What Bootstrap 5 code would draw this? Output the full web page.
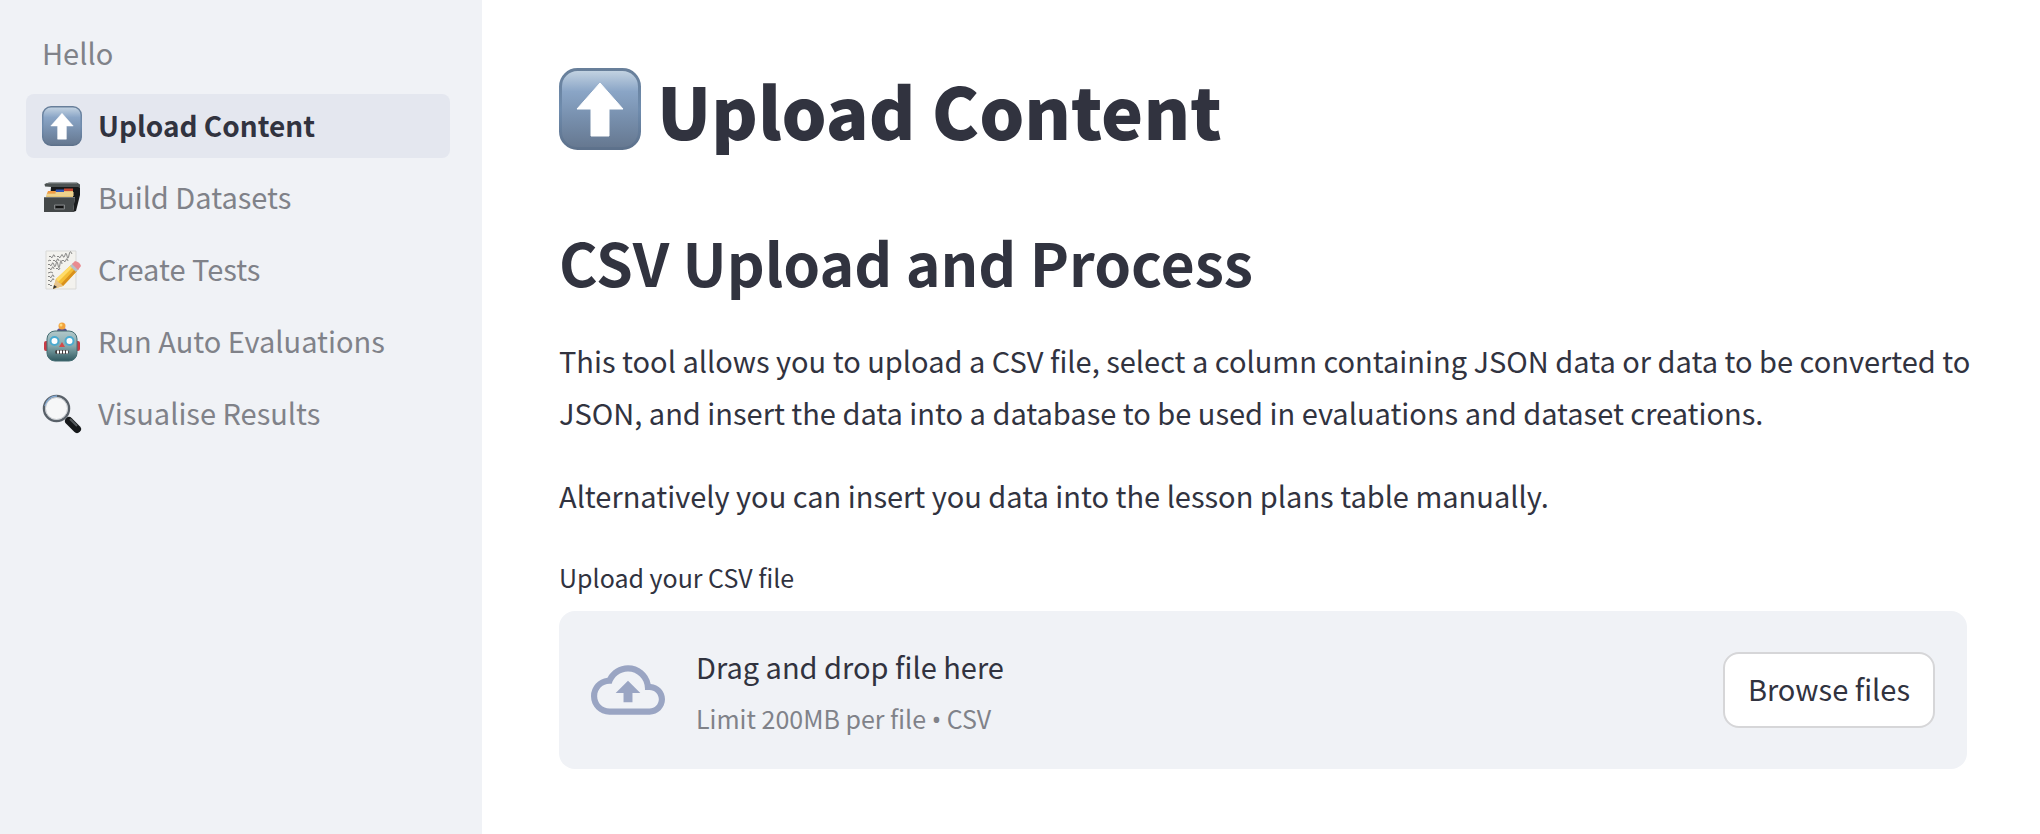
<!DOCTYPE html>
<html lang="en">
<head>
<meta charset="utf-8">
<meta name="viewport" content="width=device-width, initial-scale=1">
<title>Upload Content</title>
<link href="https://cdn.jsdelivr.net/npm/bootstrap@5.3.0/dist/css/bootstrap.min.css" rel="stylesheet">
<style>
:root{--ink:#31333f;--muted:#808289;--panel:#f0f2f6;--active:#e4e7ef}
body{font-family:"Noto Sans CJK SC","Source Sans Pro",sans-serif;font-size:29px;line-height:52px;color:var(--ink);background:#fff}
.side-panel{flex:0 0 482px;background:var(--panel);padding:22px 32px 22px 26px}
.side-panel .nav{gap:8px}
.side-panel .nav-link{height:64px;padding:0 16px;gap:16px;border-radius:8px;color:var(--muted)}
.side-panel .nav-link span{padding-bottom:4px}
.side-panel .nav-link.active{background:var(--active);color:var(--ink);font-size:28px;font-weight:700}
.side-panel .nav-link.active span{padding-bottom:2px}
.side-panel svg{width:40px;height:40px;flex:none}
.content-area{min-width:0;padding:57px 73px 65px 77px}
h1{font-size:71px;line-height:104px;font-weight:900;gap:16px;margin:0 0 57px}
h1 svg{width:82px;height:82px;flex:none}
h2{font-size:59px;line-height:88px;font-weight:600;margin:0 0 28px}
.intro p{margin:0 -16px 31px 0}
.file-label{font-size:25px;line-height:50px;margin:0 0 9px}
.drop-zone{background:var(--panel);border-radius:16px;padding:16px 32px;min-height:158px}
.drop-zone .cloud{width:74px;height:74px;margin-right:31px;fill:#9aa5c3}
.drop-text{padding-top:5px}
.hint{font-size:25px;color:var(--muted)}
.dot{font-family:"Noto Sans",sans-serif}
.btn-browse{font-size:29px;line-height:48px;padding:10px 23px 14px;border:2px solid #d6d6d8;border-radius:16px;background:#fff;color:var(--ink)}
</style>
</head>
<body>
<svg class="position-absolute" width="0" height="0" aria-hidden="true">
<defs>
<linearGradient id="key" x1="0" y1="0" x2="0" y2="1"><stop offset="0" stop-color="#c6d5e3"/><stop offset=".28" stop-color="#8aa5c6"/><stop offset=".6" stop-color="#7890ae"/><stop offset="1" stop-color="#65778f"/></linearGradient>
<linearGradient id="rim" x1="0" y1="0" x2="0" y2="1"><stop offset="0" stop-color="#687f9a"/><stop offset=".5" stop-color="#6f8cae"/><stop offset="1" stop-color="#5d718b"/></linearGradient>
</defs>
</svg>
<div class="d-flex min-vh-100">
<aside class="side-panel">
<nav class="nav flex-column flex-nowrap" aria-label="Pages">
<a class="nav-link d-flex align-items-center" href="#"><span>Hello</span></a>
<a class="nav-link active d-flex align-items-center" href="#" aria-current="page">
<svg viewBox="0 0 82 82" aria-hidden="true"><rect x="1.5" y="1.5" width="79" height="79" rx="17" fill="url(#key)" stroke="url(#rim)" stroke-width="3"/><path d="M41 15 64 41H50V68H32V41H18Z" fill="#fff" stroke="#fff" stroke-linejoin="round"/></svg>
<span>Upload Content</span></a>
<a class="nav-link d-flex align-items-center" href="#">
<svg viewBox="0 0 40 40" aria-hidden="true"><g transform="translate(0 3)"><path d="M33 14 38 5V14L34 30 31 31Z" fill="#191b1c"/><path d="M9 6H37V15L33 17H8Z" fill="#17191a"/><path d="M2.500 3 7 1.500H35L38 3.500V7L36 6H10L3 5.500Z" fill="#4b5151"/><path d="M4 2.500H35" stroke="#697070"/><path d="M4 16 5 12 13 10H31V17H4Z" fill="#e4c477"/><path d="M14 8.500H22V11H13Z" fill="#3458b8"/><path d="M22 7.500H31V10H22Z" fill="#c64631"/><path d="M6 10H14L13 12.500H5Z" fill="#f19a43"/><path d="M5 14H32M14 12H32" stroke="#f8dfa2" stroke-width="1"/><path d="M2 16H33L31 31H2Z" fill="#444849"/><path d="M2 16.500H33" stroke="#717577"/><path d="M12.500 24H22.500V28H12.500Z" fill="#343738" stroke="#818486"/><path d="M14 26H21" stroke="#121313" stroke-width="2"/></g></svg>
<span>Build Datasets</span></a>
<a class="nav-link d-flex align-items-center" href="#">
<svg viewBox="0 0 40 40" aria-hidden="true"><path d="M4 1H34V39H4Z" fill="#f3f2ee" stroke="#d9d9d7"/><g fill="none" stroke="#6b6b6b" stroke-width=".8"><path d="M7 7q1-2 2 0t2-1 2 1M15 7q1-2 2 0t2-1 2 0 2-1 2 1 2-1 3-1M6 11l2-1 1 1M11 11q1-2 2 0t2-1 2 1M20 11q1-2 2 0t2-1 2 1M6 15q1-2 2 0t2-1 2 1 2-1 2 1 2-1 2 0M6 19q1-2 2 0t2-1 2 1M14 19q1-2 2 0t2-1M6 23l3-1 2 1M6 27q1-2 2 0t2-1 2 1M6 31q1-2 2 0t2-1 2 0M6 35q1-2 2 0t2 0"/></g><path d="M11 39 14 29 29 15 35 21 21 36Z" fill="#f4bd35"/><path d="M14 29 29 15 31 17 16 32Z" fill="#ffdc68"/><path d="M21 36 35 21 33 19 19 34Z" fill="#d9911d"/><path d="M11 39 14 29 16 32 19 34 21 36Z" fill="#e7c38d"/><path d="M11 39 12 35 15 37Z" fill="#333"/><path d="M28 16 31 13 37 19 34 22Z" fill="#b6c1c7"/><path d="M30 14 33 11Q38 12 39 16L36 20Z" fill="#e98b90"/></svg>
<span>Create Tests</span></a>
<a class="nav-link d-flex align-items-center" href="#">
<svg viewBox="0 0 40 40" aria-hidden="true"><rect x="2" y="19" width="36" height="10" rx="2" fill="#c83b45"/><path d="M15 9Q15 6 20 6T25 9L23 10H17Z" fill="#61508b"/><circle cx="20" cy="4" r="3.500" fill="#f3a33c"/><circle cx="19" cy="3" r="1.500" fill="#ffdb7c"/><linearGradient id="face" x1="0" y1="0" x2="0" y2="1"><stop stop-color="#b1c8ca"/><stop offset=".5" stop-color="#86a9ad"/><stop offset="1" stop-color="#315960"/></linearGradient><rect x="5" y="9" width="30" height="30" rx="8" fill="url(#face)" stroke="#456d73"/><circle cx="12.500" cy="19" r="4" fill="#fff" stroke="#4aaad0" stroke-width="2"/><circle cx="27.500" cy="19" r="4" fill="#fff" stroke="#4aaad0" stroke-width="2"/><path d="M20 20 23 25H17Z" fill="#d34a48"/><rect x="13" y="28" width="14" height="4" rx="2" fill="#433f40"/><path d="M15 30H26" stroke="#fff" stroke-width="3" stroke-dasharray="2 1"/></svg>
<span>Run Auto Evaluations</span></a>
<a class="nav-link d-flex align-items-center" href="#">
<svg viewBox="0 0 40 40" aria-hidden="true"><path d="M24 25 28 29" stroke="#777" stroke-width="3"/><path d="M27 27 35 35" stroke="#16191b" stroke-width="8" stroke-linecap="round"/><path d="M28 25 35 32" stroke="#555b5e" stroke-width="2"/><circle cx="14.500" cy="14.500" r="12.500" fill="#f6f7f8" stroke="#596169" stroke-width="2.500"/><path d="M3 12Q6 2 15 2" fill="none" stroke="#82a9d3" stroke-width="1.500"/><circle cx="14.500" cy="14.500" r="11" fill="none" stroke="#c5c9ce"/></svg>
<span>Visualise Results</span></a>
</nav>
</aside>
<main class="content-area flex-grow-1">
<h1 class="d-flex align-items-center"><svg viewBox="0 0 82 82" aria-hidden="true"><rect x="1.500" y="1.500" width="79" height="79" rx="17" fill="url(#key)" stroke="url(#rim)" stroke-width="3"/><path d="M41 15 64 41H50V68H32V41H18Z" fill="#fff" stroke="#fff" stroke-linejoin="round"/></svg><span>Upload Content</span></h1>
<h2>CSV Upload and Process</h2>
<div class="intro">
<p>This tool allows you to upload a CSV file, select a column containing JSON data or data to be converted to JSON, and insert the data into a database to be used in evaluations and dataset creations.</p>
<p>Alternatively you can insert you data into the lesson plans table manually.</p>
</div>
<label class="file-label d-block" for="csv-file">Upload your CSV file</label>
<section class="drop-zone d-flex align-items-center">
<input class="d-none" type="file" id="csv-file" accept=".csv">
<svg class="cloud flex-shrink-0" viewBox="0 0 24 24" aria-hidden="true"><path d="M19.350 10.040A7.490 7.490 0 0 0 12 4C9.110 4 6.600 5.640 5.350 8.040A5.994 5.994 0 0 0 0 14c0 3.310 2.690 6 6 6h13c2.760 0 5-2.240 5-5 0-2.640-2.050-4.780-4.650-4.960zM19 18H6c-2.210 0-4-1.790-4-4s1.790-4 4-4h.710C7.370 7.690 9.480 6 12 6c3.040 0 5.500 2.460 5.500 5.500v.5H19c1.660 0 3 1.340 3 3s-1.340 3-3 3zM8 13h2.550v3h2.900v-3H16l-4-4z"/></svg>
<div class="drop-text d-flex flex-column me-auto"><span>Drag and drop file here</span><span class="hint">Limit 200MB per file <span class="dot">•</span> CSV</span></div>
<button class="btn btn-browse flex-shrink-0" type="button" onclick="document.getElementById('csv-file').click()">Browse files</button>
</section>
</main>
</div>
<script src="https://cdn.jsdelivr.net/npm/bootstrap@5.3.0/dist/js/bootstrap.bundle.min.js"></script>
</body>
</html>
